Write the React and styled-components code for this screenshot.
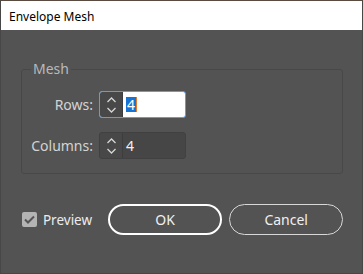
import styled, { createGlobalStyle } from 'styled-components'

const Global = createGlobalStyle`
  html, body { margin: 0; padding: 0; background: #535353; }
  * { box-sizing: border-box; }
`;

const Window = styled.div`
  width: 363px;
  height: 274px;
  display: flex;
  flex-direction: column;
  background: #535353;
  border: 1px solid #474747;
  border-top-color: #5a4a40;
  font-family: "Noto Sans", "Open Sans", sans-serif;
  overflow: hidden;
`;

const TitleBar = styled.div`
  height: 29px;
  background: #ffffff;
  color: #000000;
  font-size: 12px;
  display: flex;
  align-items: center;
  padding-left: 8px;
  padding-top: 1px;
`;

const Body = styled.div`
  flex: 1;
  display: flex;
  flex-direction: column;
  padding: 32px 19px 0 20px;
`;

const Group = styled.fieldset`
  margin: 0;
  height: 112px;
  border: 1px solid #484848;
  border-radius: 3px;
  padding: 15px 0 0 0;
  display: grid;
  grid-template-columns: 71px auto;
  grid-template-rows: 27px 27px;
  row-gap: 14px;
  column-gap: 6px;
  align-content: start;
  align-items: center;
`;

const Legend = styled.legend`
  margin-left: 9px;
  padding: 0 2px;
  color: #b9b9b9;
  font-size: 14px;
  line-height: 14px;
`;

const Label = styled.label`
  text-align: right;
  color: #d4d4d4;
  font-size: 14px;
`;

const Field = styled.div`
  width: 87px;
  height: 27px;
  display: flex;
  border: 1px solid ${p => (p.$focus ? '#5b9ee6' : '#414141')};
  border-radius: 3px;
  background: ${p => (p.$focus ? '#ffffff' : '#464646')};
  overflow: hidden;
`;

const Spin = styled.div`
  width: 23px;
  flex-shrink: 0;
  background: #484848;
  border-right: 1px solid #3d3d3d;
  display: flex;
  align-items: center;
  justify-content: center;
`;

const Value = styled.div`
  flex: 1;
  display: flex;
  align-items: center;
  padding-left: 3px;
  font-size: 14px;
  color: #f2f2f2;
`;

const Selected = styled.span`
  background: #1874d4;
  color: #ffffff;
  padding: 0 1px;
  line-height: 15px;
`;

const Caret = styled.span`
  width: 1px;
  height: 15px;
  background: #e87a2a;
`;

const Footer = styled.div`
  display: flex;
  align-items: center;
  margin-top: 30px;
  padding-left: 1px;
`;

const Check = styled.div`
  width: 15px;
  height: 15px;
  border-radius: 2px;
  background: #b4b4b4;
  display: flex;
  align-items: center;
  justify-content: center;
`;

const CheckLabel = styled.span`
  margin-left: 6px;
  color: #ececec;
  font-size: 13.5px;
  width: 65px;
`;

const Button = styled.button`
  width: ${p => (p.$primary ? '115px' : '114px')};
  height: 31px;
  margin-right: ${p => (p.$primary ? '7px' : '0')};
  border-radius: 16px;
  border: ${p => (p.$primary ? '2px solid #ffffff' : '1px solid #d8d8d8')};
  background: transparent;
  color: #f0f0f0;
  font-family: "Noto Sans", "Open Sans", sans-serif;
  font-size: 14px;
  padding: 0;
`;

const Chevrons = () => (
  <svg width="11" height="18" viewBox="0 0 11 18">
    <path d="M1.5 6 L5.5 2 L9.5 6" fill="none" stroke="#d6d6d6" strokeWidth="1.3" />
    <path d="M1.5 12 L5.5 16 L9.5 12" fill="none" stroke="#d6d6d6" strokeWidth="1.3" />
  </svg>
);

const App = () => {
  return (
    <Window>
      <Global />
      <TitleBar>Envelope Mesh</TitleBar>
      <Body>
        <Group>
          <Legend>Mesh</Legend>
          <Label>Rows:</Label>
          <Field $focus>
            <Spin><Chevrons /></Spin>
            <Value><Selected>4</Selected><Caret /></Value>
          </Field>
          <Label>Columns:</Label>
          <Field>
            <Spin><Chevrons /></Spin>
            <Value>4</Value>
          </Field>
        </Group>
        <Footer>
          <Check>
            <svg width="11" height="9" viewBox="0 0 11 9">
              <path d="M1 4.5 L4 7.5 L10 1.5" fill="none" stroke="#555555" strokeWidth="2" />
            </svg>
          </Check>
          <CheckLabel>Preview</CheckLabel>
          <Button $primary>OK</Button>
          <Button>Cancel</Button>
        </Footer>
      </Body>
    </Window>
  )
};

export default App;
